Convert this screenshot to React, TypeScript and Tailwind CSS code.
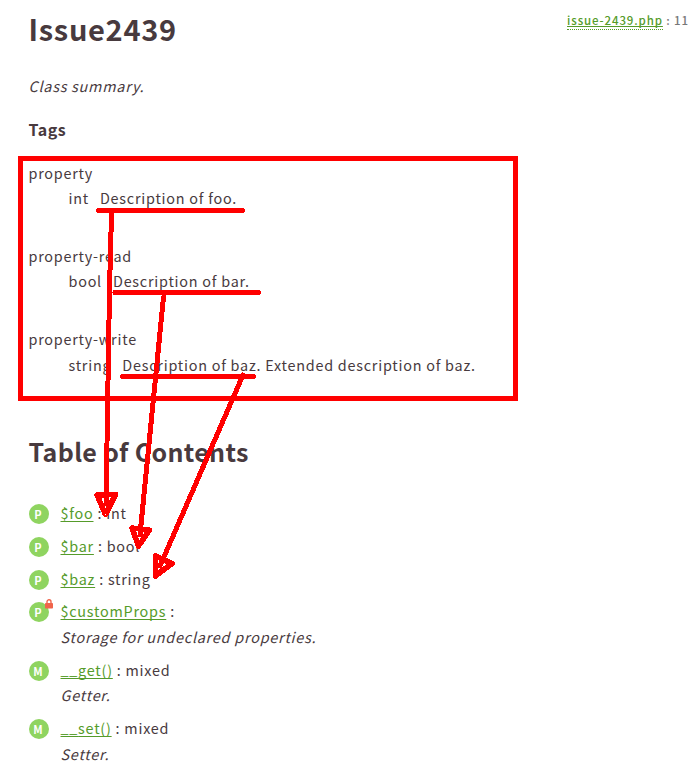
import type { ReactNode } from "react";

const LINK = "text-[#559b2a] underline underline-offset-[2px] decoration-1 [text-decoration-skip-ink:none]";

function Badge({ letter, locked }: { letter: string; locked?: boolean }) {
  return (
    <span className="relative flex h-5 w-5 shrink-0 items-center justify-center rounded-full bg-[#8fd460] pr-px text-[11px] leading-5 font-bold tracking-normal text-white">
      {letter}
      {locked && (
        <svg className="absolute -top-[3px] left-4 h-[10px] w-2" viewBox="0 0 8 10">
          <path d="M2 5V2.800a2 2 0 0 1 4 0V5" fill="none" stroke="#f0644b" strokeWidth="1.4" />
          <rect x="0" y="4" width="8" height="5.6" rx="0.8" fill="#f0644b" />
        </svg>
      )}
    </span>
  );
}

function Entry({ letter, name, type, summary, locked, className, summaryClass = "mt-[2px]" }: { letter: string; name: string; type: string; summary?: string; locked?: boolean; className: string; summaryClass?: string }) {
  const magic = name.startsWith("__");
  return (
    <div className={"flex items-start gap-3 " + className}>
      <div className="flex h-[26px] items-center"><Badge letter={letter} locked={locked} /></div>
      <div className="min-h-[26px]">
        <div className="h-6">
          <span className={LINK}>
            {magic && <span className="inline-block h-6 -translate-y-px align-top underline underline-offset-[3px] decoration-1 [text-decoration-skip-ink:none]">__</span>}
            {magic ? name.slice(2) : name}
          </span>{" "}
          : {type}
        </div>
        {summary && <div className={"h-6 tracking-[0.77px] italic " + summaryClass}>{summary}</div>}
      </div>
    </div>
  );
}

function Tag({ name, type, children, className, rowClass = "mt-px" }: { name: string; type: string; children: ReactNode; className: string; rowClass?: string }) {
  return (
    <div className={className}>
      <div className="h-6">{name}</div>
      <div className={"flex h-6 pl-10 " + rowClass}><span>{type}</span><span className="ml-[11px]">{children}</span></div>
    </div>
  );
}

export default function App() {
  return (
    <div className="relative h-[771px] w-[700px] overflow-hidden bg-white pl-[28.5px] font-['Noto_Sans_CJK_JP','Noto_Sans_CJK_SC',sans-serif] text-[14.4px] leading-6 tracking-[0.76px] whitespace-nowrap text-[#483a3e]">
      <div className="flex justify-between pr-[11px]">
        <h1 className="mt-1.5 h-11 text-[29px] leading-[44px] font-bold tracking-[0.7px]">Issue2439</h1>
        <div className="mt-2 h-6 text-[11.5px] font-medium tracking-[0.88px] text-[#777777]">
          <span className="inline-block h-[22px] border-b border-dotted border-[#559b2a] text-[#559b2a] underline underline-offset-[1px] decoration-1 [text-decoration-skip-ink:none]">issue-2439.php</span> : 11
        </div>
      </div>
      <p className="mt-6 h-6 italic">Class summary.</p>
      <h2 className="mt-[19px] h-6 text-[16px] font-bold tracking-[0.5px]">Tags</h2>
      <Tag className="mt-5" name="property" type="int">Description of foo.</Tag>
      <Tag className="mt-[34px]" name="property-read" type="bool">Description of bar.</Tag>
      <Tag className="mt-[34px]" rowClass="mt-0.5" name="property-write" type="string">Description of baz. Extended description of baz.</Tag>
      <h2 className="mt-[54px] h-10 text-[25px] leading-10 font-bold tracking-[0.34px]">Table of Contents</h2>
      <Entry className="mt-[30px]" letter="P" name="$foo" type="int" />
      <Entry className="mt-[7px]" letter="P" name="$bar" type="bool" />
      <Entry className="mt-[7px]" letter="P" name="$baz" type="string" />
      <Entry className="mt-1.5" letter="P" name="$customProps" type="" summary="Storage for undeclared properties." locked />
      <Entry className="mt-[9px]" summaryClass="mt-px" letter="M" name="__get()" type="mixed" summary="Getter." />
      <Entry className="mt-[9px]" letter="M" name="__set()" type="mixed" summary="Setter." />
      <svg className="absolute inset-0" width="700" height="771" viewBox="0 0 700 771" fill="none" stroke="#f00" strokeWidth="5" strokeLinecap="round" strokeLinejoin="round" shapeRendering="crispEdges">
        <rect x="20.500" y="158.500" width="495" height="240" strokeLinejoin="miter" />
        <path d="M98.500 210.500H242.500M115 292.500H258.500M122.500 376.500H253.500" />
        <path d="M111.500 213L109.500 290L106 504M163.500 297L140 535M243 375L160 566" />
        <path strokeWidth="5.500" d="M97 495L115.500 494.500L105.500 514.500ZM132 528L149.500 530L138.500 546ZM155.500 556L172 563.500L155.500 576Z" />
      </svg>
    </div>
  );
}
